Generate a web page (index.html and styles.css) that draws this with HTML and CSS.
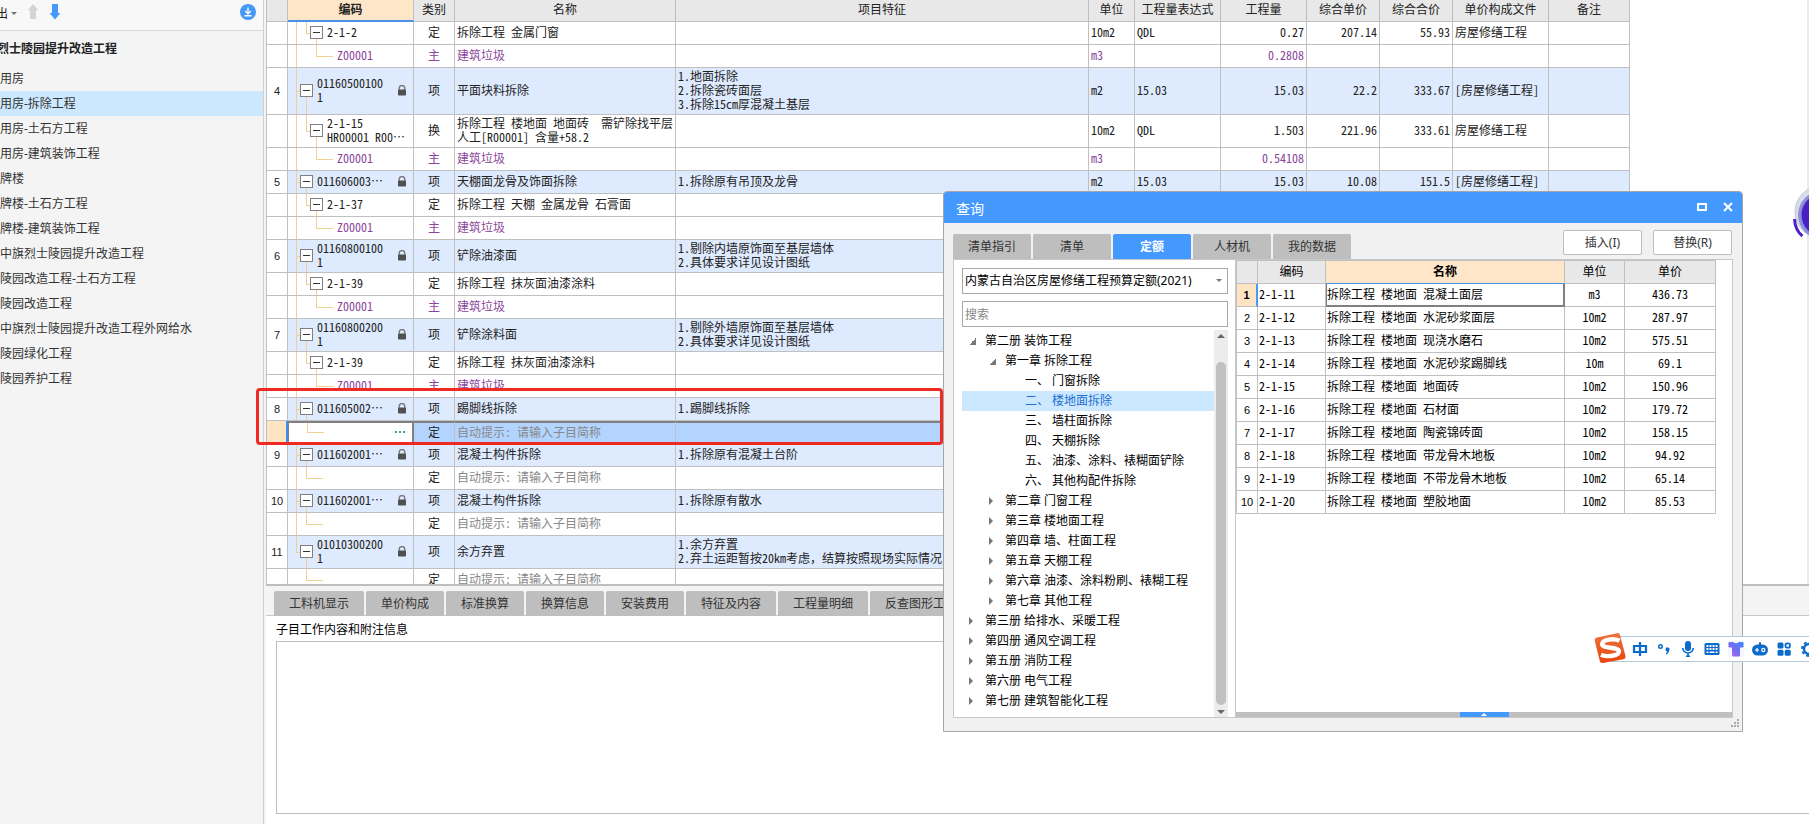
FILE: index.html
```html
<!DOCTYPE html>
<html lang="zh-CN">
<head>
<meta charset="utf-8">
<title>计价工程</title>
<link rel="stylesheet" href="styles.css">
</head>
<body>
<svg class="defs" aria-hidden="true">
  <symbol id="lock" viewBox="0 0 10 11"><path d="M2.2 5V3.4a2.8 2.8 0 0 1 5.6 0V5" fill="none" stroke="#777" stroke-width="1.3"/><rect x="1" y="4.6" width="8" height="6" rx=".8" fill="#505050"/></symbol>
</svg>
<div class="app">
  <aside class="side">
    <div class="side-bar">
      <button class="export" type="button">出<i class="caret"></i></button>
      <button class="ico" type="button" aria-label="上移"><svg width="12" height="16" viewBox="0 0 12 16"><path d="M6 0l5.500 6.500H9V15H3V6.500H.5z" fill="#d4d4d4"/></svg></button>
      <button class="ico" type="button" aria-label="下移"><svg width="12" height="16" viewBox="0 0 12 16"><path d="M6 15.500l5.500-6.500H9V0H3v9H.5z" fill="#4499fb"/></svg></button>
      <button class="ico down" type="button" aria-label="下载"><svg width="16" height="16" viewBox="0 0 16 16"><circle cx="8" cy="8" r="8" fill="#4499f5"/><path d="M8 3.500v6M5.200 7L8 9.800 10.800 7M4.500 11.700h7" fill="none" stroke="#fff" stroke-width="1.400"/></svg></button>
    </div>
    <h1 class="side-title">烈士陵园提升改造工程</h1>
    <ul class="side-list">
      <li>用房</li>
      <li class="on">用房-拆除工程</li>
      <li>用房-土石方工程</li>
      <li>用房-建筑装饰工程</li>
      <li>牌楼</li>
      <li>牌楼-土石方工程</li>
      <li>牌楼-建筑装饰工程</li>
      <li>中旗烈士陵园提升改造工程</li>
      <li>陵园改造工程-土石方工程</li>
      <li>陵园改造工程</li>
      <li>中旗烈士陵园提升改造工程外网给水</li>
      <li>陵园绿化工程</li>
      <li>陵园养护工程</li>
    </ul>
  </aside>

  <main class="main">
    <div class="grid-wrap">
      <table class="grid bill">
        <colgroup><col class="w-no"><col class="w-code"><col class="w-kind"><col class="w-name"><col class="w-feat"><col class="w-unit"><col class="w-qty"><col class="w-qty"><col class="w-price"><col class="w-price"><col class="w-file"><col class="w-note"></colgroup>
        <thead><tr><th></th><th class="hot">编码</th><th>类别</th><th>名称</th><th>项目特征</th><th>单位</th><th>工程量表达式</th><th>工程量</th><th>综合单价</th><th>综合合价</th><th>单价构成文件</th><th>备注</th></tr></thead>
        <tbody>
          <tr><td></td><td class="l2"><div class="code"><button class="tog" type="button" aria-label="折叠"></button><span>2-1-2</span></div></td><td>定</td><td>拆除工程 金属门窗</td><td></td><td>10m2</td><td>QDL</td><td>0.27</td><td>207.14</td><td>55.93</td><td>房屋修缮工程</td><td></td></tr>
          <tr class="mat"><td></td><td class="l3"><div class="code">Z00001</div></td><td>主</td><td>建筑垃圾</td><td></td><td>m3</td><td></td><td>0.2808</td><td></td><td></td><td></td><td></td></tr>
          <tr class="item"><td>4</td><td class="l1"><div class="code"><button class="tog" type="button" aria-label="折叠"></button><span>01160500100<br>1</span><svg class="lock"><use href="#lock"/></svg></div></td><td>项</td><td>平面块料拆除</td><td>1.地面拆除<br>2.拆除瓷砖面层<br>3.拆除15cm厚混凝土基层</td><td>m2</td><td>15.03</td><td>15.03</td><td>22.2</td><td>333.67</td><td>[房屋修缮工程]</td><td></td></tr>
          <tr><td></td><td class="l2"><div class="code"><button class="tog" type="button" aria-label="折叠"></button><span>2-1-15<br>HR00001 R00…</span></div></td><td>换</td><td>拆除工程 楼地面 地面砖&nbsp; 需铲除找平层<br>人工[R00001] 含量+58.2</td><td></td><td>10m2</td><td>QDL</td><td>1.503</td><td>221.96</td><td>333.61</td><td>房屋修缮工程</td><td></td></tr>
          <tr class="mat"><td></td><td class="l3"><div class="code">Z00001</div></td><td>主</td><td>建筑垃圾</td><td></td><td>m3</td><td></td><td>0.54108</td><td></td><td></td><td></td><td></td></tr>
          <tr class="item"><td>5</td><td class="l1"><div class="code"><button class="tog" type="button" aria-label="折叠"></button><span>011606003…</span><svg class="lock"><use href="#lock"/></svg></div></td><td>项</td><td>天棚面龙骨及饰面拆除</td><td>1.拆除原有吊顶及龙骨</td><td>m2</td><td>15.03</td><td>15.03</td><td>10.08</td><td>151.5</td><td>[房屋修缮工程]</td><td></td></tr>
          <tr><td></td><td class="l2"><div class="code"><button class="tog" type="button" aria-label="折叠"></button><span>2-1-37</span></div></td><td>定</td><td>拆除工程 天棚 金属龙骨 石膏面</td><td></td><td></td><td></td><td></td><td></td><td></td><td></td><td></td></tr>
          <tr class="mat"><td></td><td class="l3"><div class="code">Z00001</div></td><td>主</td><td>建筑垃圾</td><td></td><td></td><td></td><td></td><td></td><td></td><td></td><td></td></tr>
          <tr class="item"><td>6</td><td class="l1"><div class="code"><button class="tog" type="button" aria-label="折叠"></button><span>01160800100<br>1</span><svg class="lock"><use href="#lock"/></svg></div></td><td>项</td><td>铲除油漆面</td><td>1.剔除内墙原饰面至基层墙体<br>2.具体要求详见设计图纸</td><td></td><td></td><td></td><td></td><td></td><td></td><td></td></tr>
          <tr><td></td><td class="l2"><div class="code"><button class="tog" type="button" aria-label="折叠"></button><span>2-1-39</span></div></td><td>定</td><td>拆除工程 抹灰面油漆涂料</td><td></td><td></td><td></td><td></td><td></td><td></td><td></td><td></td></tr>
          <tr class="mat"><td></td><td class="l3"><div class="code">Z00001</div></td><td>主</td><td>建筑垃圾</td><td></td><td></td><td></td><td></td><td></td><td></td><td></td><td></td></tr>
          <tr class="item"><td>7</td><td class="l1"><div class="code"><button class="tog" type="button" aria-label="折叠"></button><span>01160800200<br>1</span><svg class="lock"><use href="#lock"/></svg></div></td><td>项</td><td>铲除涂料面</td><td>1.剔除外墙原饰面至基层墙体<br>2.具体要求详见设计图纸</td><td></td><td></td><td></td><td></td><td></td><td></td><td></td></tr>
          <tr><td></td><td class="l2"><div class="code"><button class="tog" type="button" aria-label="折叠"></button><span>2-1-39</span></div></td><td>定</td><td>拆除工程 抹灰面油漆涂料</td><td></td><td></td><td></td><td></td><td></td><td></td><td></td><td></td></tr>
          <tr class="mat"><td></td><td class="l3"><div class="code">Z00001</div></td><td>主</td><td>建筑垃圾</td><td></td><td></td><td></td><td></td><td></td><td></td><td></td><td></td></tr>
          <tr class="item"><td>8</td><td class="l1"><div class="code"><button class="tog" type="button" aria-label="折叠"></button><span>011605002…</span><svg class="lock"><use href="#lock"/></svg></div></td><td>项</td><td>踢脚线拆除</td><td>1.踢脚线拆除</td><td></td><td></td><td></td><td></td><td></td><td></td><td></td></tr>
          <tr class="current"><td></td><td class="l2 leaf"><div class="code"><button class="more" type="button" aria-label="选择"><i></i><i></i><i></i></button></div></td><td>定</td><td class="hint">自动提示: 请输入子目简称</td><td></td><td></td><td></td><td></td><td></td><td></td><td></td><td></td></tr>
          <tr class="item"><td>9</td><td class="l1"><div class="code"><button class="tog" type="button" aria-label="折叠"></button><span>011602001…</span><svg class="lock"><use href="#lock"/></svg></div></td><td>项</td><td>混凝土构件拆除</td><td>1.拆除原有混凝土台阶</td><td></td><td></td><td></td><td></td><td></td><td></td><td></td></tr>
          <tr><td></td><td class="l2 leaf"></td><td>定</td><td class="hint">自动提示: 请输入子目简称</td><td></td><td></td><td></td><td></td><td></td><td></td><td></td><td></td></tr>
          <tr class="item"><td>10</td><td class="l1"><div class="code"><button class="tog" type="button" aria-label="折叠"></button><span>011602001…</span><svg class="lock"><use href="#lock"/></svg></div></td><td>项</td><td>混凝土构件拆除</td><td>1.拆除原有散水</td><td></td><td></td><td></td><td></td><td></td><td></td><td></td></tr>
          <tr><td></td><td class="l2 leaf"></td><td>定</td><td class="hint">自动提示: 请输入子目简称</td><td></td><td></td><td></td><td></td><td></td><td></td><td></td><td></td></tr>
          <tr class="item"><td>11</td><td class="l1 last"><div class="code"><button class="tog" type="button" aria-label="折叠"></button><span>01010300200<br>1</span><svg class="lock"><use href="#lock"/></svg></div></td><td>项</td><td>余方弃置</td><td>1.余方弃置<br>2.弃土运距暂按20km考虑，结算按照现场实际情况</td><td></td><td></td><td></td><td></td><td></td><td></td><td></td></tr>
          <tr><td></td><td class="l2 leaf last"></td><td>定</td><td class="hint">自动提示: 请输入子目简称</td><td></td><td></td><td></td><td></td><td></td><td></td><td></td><td></td></tr>
        </tbody>
      </table>
    </div>

    <section class="detail">
      <nav class="tabs detail-tabs">
        <button type="button">工料机显示</button><button type="button">单价构成</button><button type="button">标准换算</button><button type="button">换算信息</button><button type="button">安装费用</button><button type="button">特征及内容</button><button type="button">工程量明细</button><button type="button">反查图形工程量</button>
      </nav>
      <div class="detail-body">
        <label for="memo">子目工作内容和附注信息</label>
        <textarea id="memo" readonly></textarea>
      </div>
    </section>
  </main>
</div>

<section class="dialog" role="dialog" aria-labelledby="dlg-title">
  <header class="dlg-head">
    <h2 id="dlg-title">查询</h2>
    <button type="button" aria-label="最大化"><svg width="10" height="10" viewBox="0 0 10 10"><rect x="1" y="2" width="8" height="6" fill="none" stroke="#fff" stroke-width="2"/></svg></button>
    <button type="button" aria-label="关闭"><svg width="10" height="10" viewBox="0 0 10 10"><path d="M1 1l8 8M9 1L1 9" stroke="#fff" stroke-width="2"/></svg></button>
  </header>
  <div class="dlg-bar">
    <nav class="tabs">
      <button type="button">清单指引</button><button type="button">清单</button><button type="button" class="on">定额</button><button type="button">人材机</button><button type="button">我的数据</button>
    </nav>
    <div class="actions"><button type="button">插入(I)</button><button type="button">替换(R)</button></div>
  </div>
  <div class="dlg-body">
    <div class="picker">
      <div class="field"><select aria-label="定额库"><option>内蒙古自治区房屋修缮工程预算定额(2021)</option></select><i class="caret"></i></div>
      <input class="search" type="text" placeholder="搜索" aria-label="搜索">
      <div class="tree-box">
        <ul class="tree">
          <li class="t0 open">第二册 装饰工程</li>
          <li class="t1 open">第一章 拆除工程</li>
          <li class="t2">一、 门窗拆除</li>
          <li class="t2 on">二、 楼地面拆除</li>
          <li class="t2">三、 墙柱面拆除</li>
          <li class="t2">四、 天棚拆除</li>
          <li class="t2">五、 油漆、涂料、裱糊面铲除</li>
          <li class="t2">六、 其他构配件拆除</li>
          <li class="t1">第二章 门窗工程</li>
          <li class="t1">第三章 楼地面工程</li>
          <li class="t1">第四章 墙、柱面工程</li>
          <li class="t1">第五章 天棚工程</li>
          <li class="t1">第六章 油漆、涂料粉刷、裱糊工程</li>
          <li class="t1">第七章 其他工程</li>
          <li class="t0">第三册 给排水、采暖工程</li>
          <li class="t0">第四册 通风空调工程</li>
          <li class="t0">第五册 消防工程</li>
          <li class="t0">第六册 电气工程</li>
          <li class="t0">第七册 建筑智能化工程</li>
        </ul>
        <div class="scroll"><i class="up"></i><i class="thumb"></i><i class="dn"></i></div>
      </div>
    </div>
    <div class="result">
      <table class="grid quota">
        <colgroup><col class="q-no"><col class="q-code"><col class="q-name"><col class="q-unit"><col class="q-price"></colgroup>
        <thead><tr><th></th><th>编码</th><th class="hot">名称</th><th>单位</th><th>单价</th></tr></thead>
        <tbody>
          <tr class="pick"><td>1</td><td>2-1-11</td><td>拆除工程 楼地面 混凝土面层</td><td>m3</td><td>436.73</td></tr>
          <tr><td>2</td><td>2-1-12</td><td>拆除工程 楼地面 水泥砂浆面层</td><td>10m2</td><td>287.97</td></tr>
          <tr><td>3</td><td>2-1-13</td><td>拆除工程 楼地面 现浇水磨石</td><td>10m2</td><td>575.51</td></tr>
          <tr><td>4</td><td>2-1-14</td><td>拆除工程 楼地面 水泥砂浆踢脚线</td><td>10m</td><td>69.1</td></tr>
          <tr><td>5</td><td>2-1-15</td><td>拆除工程 楼地面 地面砖</td><td>10m2</td><td>150.96</td></tr>
          <tr><td>6</td><td>2-1-16</td><td>拆除工程 楼地面 石材面</td><td>10m2</td><td>179.72</td></tr>
          <tr><td>7</td><td>2-1-17</td><td>拆除工程 楼地面 陶瓷锦砖面</td><td>10m2</td><td>158.15</td></tr>
          <tr><td>8</td><td>2-1-18</td><td>拆除工程 楼地面 带龙骨木地板</td><td>10m2</td><td>94.92</td></tr>
          <tr><td>9</td><td>2-1-19</td><td>拆除工程 楼地面 不带龙骨木地板</td><td>10m2</td><td>65.14</td></tr>
          <tr><td>10</td><td>2-1-20</td><td>拆除工程 楼地面 塑胶地面</td><td>10m2</td><td>85.53</td></tr>
        </tbody>
      </table>
      <div class="splitter"><i></i></div>
    </div>
  </div>
  <svg class="grip" width="9" height="9" viewBox="0 0 9 9" fill="#aaa"><path d="M6 0h2v2H6zM3 3h2v2H3zM6 3h2v2H6zM0 6h2v2H0zM3 6h2v2H3zM6 6h2v2H6z"/></svg>
</section>

<div class="mark"></div>

<svg class="orb" width="16" height="56" viewBox="0 0 16 56">
  <circle cx="28" cy="27" r="26" fill="#d9dcea" stroke="#c3c7d8" stroke-width="1"/>
  <circle cx="29" cy="30" r="24" fill="#8d90d8"/>
  <circle cx="30" cy="30" r="21.500" fill="#4a1fc4"/>
  <path d="M1.500 34c.5 8 4 14 8 17" fill="none" stroke="#4a22c8" stroke-width="3"/>
</svg>

<div class="ime">
  <svg class="ime-logo" width="32" height="32" viewBox="0 0 32 32">
    <defs><linearGradient id="og" x1="0" y1="0" x2="0" y2="1"><stop offset="0" stop-color="#f0713c"/><stop offset="1" stop-color="#e8450c"/></linearGradient></defs>
    <path d="M3 5.500L23 1.200q2.500-.5 3 2L31.500 24q.5 2.500-2 3.200L9 31q-2.500.5-3.200-2L.8 9q-.5-2.800 2.200-3.500z" fill="url(#og)"/>
    <path d="M25.500 8.800C20 6 8 7.300 8.200 12.300c.2 4.600 16.500 2.200 16.800 6.900.2 4.700-12 6.300-18 3.600" fill="none" stroke="#fff" stroke-width="4.400"/>
  </svg>
  <svg width="16" height="16" viewBox="0 0 16 16" fill="none" stroke="#0b6bcb" stroke-width="2.200"><path d="M2 5h12v6H2zM8 1v14"/></svg>
  <svg width="16" height="16" viewBox="0 0 16 16"><circle cx="4.500" cy="5.500" r="1.800" fill="none" stroke="#0b6bcb" stroke-width="1.400"/><path d="M9.500 8.200a2 2 0 1 1 3.800 1c-.3 2-1.500 3.500-3 4.200l-.6-1c.8-.5 1.300-1.200 1.400-2a2 2 0 0 1-1.600-2.200z" fill="#0b6bcb"/></svg>
  <svg width="16" height="16" viewBox="0 0 16 16"><rect x="5" y="0" width="6" height="10" rx="3" fill="#0b6bcb"/><path d="M2.700 7a5.300 5 0 0 0 10.600 0M8 12v3.500M6 15.200h4" fill="none" stroke="#0b6bcb" stroke-width="1.600"/></svg>
  <svg width="16" height="16" viewBox="0 0 16 16"><rect x=".5" y="2" width="15" height="12" rx="1.500" fill="#0b6bcb"/><path d="M2.500 5h11M2.500 8h11" stroke="#fff" stroke-width="1.800" stroke-dasharray="1.900 1.130"/><path d="M2.500 11.200h2M5.700 11.200h4.800M11.600 11.200h2" stroke="#fff" stroke-width="1.600"/></svg>
  <svg class="skin" width="16" height="16" viewBox="0 0 16 16"><defs><linearGradient id="sg" x1="1" y1="0" x2="0" y2="1"><stop offset="0" stop-color="#3a86ff"/><stop offset=".6" stop-color="#7b6af0"/><stop offset="1" stop-color="#c06ae0"/></linearGradient></defs><path d="M1.500 1H5q3 2.500 6 0h3.500q1 0 1 1v3.500q0 1-1 1H12V14q0 1.500-1.500 1.500h-5Q4 15.500 4 14V6.500H1.500q-1 0-1-1V2q0-1 1-1z" fill="url(#sg)"/></svg>
  <svg width="16" height="16" viewBox="0 0 16 16"><path d="M8 1.200v3" stroke="#0b6bcb" stroke-width="2"/><rect x="0" y="3.500" width="16" height="11" rx="5.500" fill="#0b6bcb"/><path d="M5 7v4M3 9h4" stroke="#fff" stroke-width="1.200"/><circle cx="11.300" cy="9" r="1.600" fill="none" stroke="#fff" stroke-width="1.200"/></svg>
  <svg width="16" height="16" viewBox="0 0 16 16" fill="#0b6bcb"><rect x="1.500" y="1.500" width="6" height="6" rx="1.500"/><rect x="9.500" y="2.300" width="4.400" height="4.400" rx="1.500" fill="none" stroke="#0b6bcb" stroke-width="1.800"/><rect x="1.500" y="8.700" width="6" height="6" rx="1.500"/><rect x="8.700" y="8.700" width="6" height="6" rx="1.500"/></svg>
  <svg width="16" height="16" viewBox="0 0 16 16" fill="none" stroke="#0b6bcb"><circle cx="9" cy="8" r="5" stroke-width="2.400"/><circle cx="9" cy="8" r="7" stroke-width="2" stroke-dasharray="2.800 2.700"/></svg>
</div>
</body>
</html>
```

FILE: styles.css
```css
*, *::before { box-sizing: border-box; }
body {
  margin: 0;
  overflow: hidden;
  background: #fff;
  color: #222;
  font: 12px/14px "Noto Sans", "Noto Sans CJK SC", sans-serif;
}
button, input, select, textarea { font: inherit; color: inherit; margin: 0; }
button { padding: 0; border: 0; background: none; }
h1, h2, ul { margin: 0; padding: 0; font-size: 12px; }
li { list-style: none; }
i { display: block; }
.defs { display: none; }

.app { display: flex; height: 100vh; background: #f4f4f4; }

/* project list */
.side { flex: 0 0 264px; border-right: 1px solid #d0d0d0; overflow: hidden; white-space: nowrap; }
.side-bar { display: flex; align-items: center; height: 31px; padding: 0 7px 6px 0; border-bottom: 1px solid #d8d8d8; background: #f8f8f8; }
.export { display: flex; align-items: center; gap: 3px; margin: 3px 10px 0 -4px; }
.caret { border: 3px solid transparent; border-top-color: #777; border-bottom: 0; }
.ico { display: flex; margin-right: 10px; }
.ico.down { margin: 0 0 0 auto; }
.side-title { padding: 10px 0 9px; margin-left: -3px; line-height: 16px; }
.side-list { line-height: 25px; color: #333; }
.side-list .on { background: #cce8ff; }

/* grids */
.main { flex: 1; min-width: 0; margin-left: 2px; display: flex; flex-direction: column; background: #fff; }
.grid-wrap { flex: 1; min-height: 0; overflow: hidden; border-right: 2px solid #ebebeb; }
.grid { table-layout: fixed; border-collapse: separate; border-spacing: 0; border-left: 1px solid #c0c0c0; font-family: "Noto Sans Mono CJK SC", "Noto Sans CJK SC", monospace; }
.grid th { background: #e8e8e8; font-weight: 400; }
.grid td, .grid th { height: 23px; padding: 1px 2px 3px; border: 0 solid #c0c0c0; border-width: 0 1px 1px 0; white-space: nowrap; overflow: hidden; text-align: left; }
.grid th, .grid td:first-child { text-align: center; }
.grid td:first-child { padding: 2px 0; font-family: "Liberation Sans", sans-serif; font-size: 11px; }
.grid th.hot { background: #ffe6c8; border-bottom: 2px solid #4a90e8; font-weight: 700; }

.bill { width: 1364px; }
.w-no { width: 21px; } .w-code { width: 126px; } .w-kind { width: 41px; } .w-name { width: 221px; }
.w-feat { width: 413px; } .w-unit { width: 46px; } .w-qty { width: 86px; } .w-price { width: 73px; }
.w-file { width: 96px; } .w-note { width: 81px; }
.grid.bill th { height: 22px; padding: 0 0 3px; }
.bill td:nth-child(3) { text-align: center; }
.bill td:nth-child(8), .bill td:nth-child(9), .bill td:nth-child(10) { text-align: right; }
.item td { background-color: #deeafe; }
.item td:first-child { background: #fff; }
.mat td { color: #8c459c; }
.grid .hint { color: #888; }

.code { display: flex; align-items: center; gap: 4px; }
.code span { flex: 1; }
.tog { flex: 0 0 13px; height: 13px; border: 1px solid #808080; background: #fff linear-gradient(#333, #333) center / 7px 1px no-repeat; }
.lock { flex: 0 0 10px; height: 11px; margin-right: 4px; }

/* guide lines of the code column */
.l1, .l2, .l3 { --g: linear-gradient(#f3cf94, #f3cf94); background-repeat: no-repeat; }
.grid .l1 { padding-left: 12px; background-image: var(--g), var(--g), var(--g); background-size: 1px 100%, 4px 1px, 1px 50%; background-position: 8px 0, 8px 50%, 18px 100%; }
.grid .l2 { padding-left: 22px; background-image: var(--g), var(--g), var(--g), var(--g); background-size: 1px 100%, 1px 50%, 4px 1px, 1px 50%; background-position: 8px 0, 18px 0, 18px 50%, 28px 100%; }
.grid .l3 { padding-left: 49px; background-image: var(--g), var(--g), var(--g); background-size: 1px 100%, 1px 50%, 17px 1px; background-position: 8px 0, 28px 0, 28px 50%; }
.grid .leaf { background-size: 1px 100%, 1px 50%, 17px 1px, 0 0; }
.grid .l1.last { background-size: 1px 50%, 4px 1px, 1px 50%; }
.grid .l2.last { background-size: 0 0, 1px 50%, 17px 1px, 0 0; }

.grid .current td { background-color: #b3d4ff; border-top: 2px solid #808080; padding: 0 2px 2px; }
.grid .current td:first-child { background: #ffe4c4; border-top: 0; border-right: 2px solid #3f8ef0; }
.grid .current .leaf { background-color: #fff; background-size: 0 0, 1px 50%, 17px 1px, 0 0; border: 2px solid #808080; border-left-width: 1px; }
.more { display: flex; gap: 2px; margin: 0 5px 0 auto; }
.more i { width: 2px; height: 2px; background: #4a8ea8; }

/* tabs */
.tabs { display: flex; gap: 2px; }
.tabs button { height: 25px; border-radius: 2px 2px 0 0; background: #bebebe; color: #333; }
.tabs .on { background: #4499ff; color: #fff; font-weight: 700; }
.detail { border-top: 2px solid #bebebe; overflow: hidden; }
.detail-tabs { padding: 5px 8px 0; background: #f4f4f4; box-shadow: inset 0 -1px #c8c8c8; }
.detail-tabs button { flex: none; padding: 0 15px; }
.detail-body { padding: 6px 0 10px 10px; color: #000; }
.detail-body label { display: block; line-height: 16px; margin-bottom: 3px; }
.detail-body textarea { display: block; width: 100%; height: 173px; border: 1px solid #bebebe; border-right: 0; border-radius: 0; resize: none; background: #fff; }

/* query window */
.dialog { position: absolute; left: 943px; top: 191px; width: 800px; padding-bottom: 13px; border: 1px solid #a6a6a6; border-radius: 4px 4px 0 0; background: #f1f1f1; overflow: hidden; }
.dlg-head { display: flex; align-items: center; gap: 16px; height: 31px; padding: 0 9px 2px 12px; background: #4499ff; color: #fff; }
.dlg-head h2 { flex: 1; padding-top: 4px; font-size: 14px; font-weight: 400; }
.dlg-head button { display: flex; }
.dlg-bar { display: flex; align-items: flex-end; justify-content: space-between; padding: 7px 10px 0 9px; }
.dlg-bar .tabs button { width: 78px; }
.actions { display: flex; gap: 11px; padding-bottom: 4px; }
.actions button { width: 79px; height: 25px; border: 1px solid #bebebe; border-radius: 2px; background: #fff; color: #333; }
.dlg-body { display: flex; margin: 0 9px; border: 1px solid #c8c8c8; background: #fff; color: #000; }
.picker { flex: 0 0 282px; padding: 8px 7px 0 8px; border-right: 1px solid #c8c8c8; }
.field { position: relative; }
.field .caret { position: absolute; right: 6px; top: 11px; }
.field select, .search { display: block; width: 100%; height: 26px; padding: 0 2px; border: 1px solid #a8a8a8; border-radius: 0; background: #fff; appearance: none; }
.search { margin-top: 7px; outline: 0; }
.search::placeholder { color: #888; }
.tree-box { display: flex; margin-top: 3px; }
.tree { flex: 1; padding: 1px 0 6px; line-height: 20px; white-space: nowrap; }
.tree li { display: flex; align-items: center; }
.tree li::before { content: ""; width: 4px; height: 8px; margin-right: 12px; border: 4px solid transparent; border-left-color: #777; border-right: 0; }
.tree .open::before { width: 7px; height: 7px; margin-right: 9px; border: 0; background: linear-gradient(135deg, transparent 50%, #777 50%); }
.tree .t0 { padding-left: 7px; }
.tree .t1 { padding-left: 27px; }
.tree .t2 { padding-left: 63px; }
.tree .t2::before { display: none; }
.tree .on { background: #cce8ff; color: #1c6fd0; }
.scroll { display: flex; flex-direction: column; align-items: center; flex: 0 0 14px; padding: 4px 0 3px; background: #ececec; }
.scroll .up { border: 4px solid transparent; border-bottom-color: #666; border-top: 0; margin-bottom: 24px; }
.scroll .thumb { flex: 1; width: 10px; border-radius: 5px; background: #c0c0c0; }
.scroll .dn { border: 4px solid transparent; border-top-color: #666; border-bottom: 0; margin-top: 5px; }
.result { flex: 1; display: flex; flex-direction: column; justify-content: space-between; }
.quota { width: 480px; border-top: 1px solid #c0c0c0; }
.q-no { width: 21px; } .q-code { width: 68px; } .q-name { width: 239px; } .q-unit { width: 60px; } .q-price { width: 91px; }
.quota td:nth-child(4), .quota td:nth-child(5) { text-align: center; }
.grid.quota td:nth-child(2), .grid.quota td:nth-child(3) { padding-left: 1px; }
.quota .pick td:first-child { background: #ffe4c4; border-right: 2px solid #4499ff; font-weight: 700; }
.quota th.hot { border-bottom-width: 1px; }
.grid.quota .pick td:nth-child(3) { padding: 0 1px 1px 0; border: 1px solid #808080; border-width: 0 2px 2px 1px; }
.splitter { height: 5px; background: #c0c0c0; }
.splitter i { display: flex; justify-content: center; align-items: center; width: 49px; height: 5px; margin: 0 auto; background: #4499ff; }
.splitter i::before { content: ""; border: 3px solid transparent; border-bottom-color: #fff; border-top: 0; }
.grip { position: absolute; right: 2px; bottom: 3px; }

/* overlays */
.mark { position: absolute; left: 256px; top: 388px; width: 687px; height: 57px; border: 3px solid #ee2a22; border-radius: 4px; }
.orb { position: absolute; right: 0; top: 185px; }
.ime { position: absolute; left: 1611px; right: -4px; top: 636px; display: flex; align-items: center; gap: 8px; height: 26px; padding-left: 20px; border: 1px solid #b4c8dc; border-right: 0; background: #fff; }
.ime svg { flex: none; }
.ime .ime-logo { position: absolute; left: -18px; top: -5px; }
.ime .skin { background: #f3f6ff; }
```
